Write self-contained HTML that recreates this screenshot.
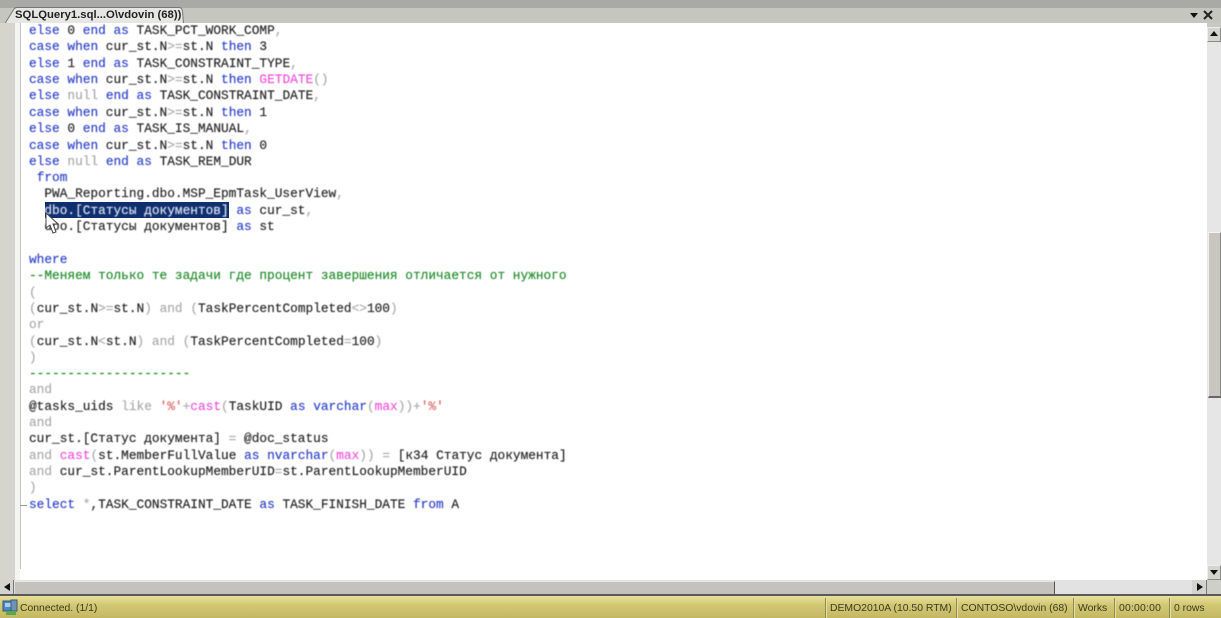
<!DOCTYPE html>
<html><head><meta charset="utf-8">
<style>
html,body{margin:0;padding:0;width:1221px;height:618px;overflow:hidden;background:#fff}
*{box-sizing:border-box}
.a{position:absolute}
#code{position:absolute;left:0;top:1px;width:1207px;height:579px;overflow:hidden;filter:blur(.45px)}
.l{position:absolute;left:29px;white-space:pre;font:12.8px/16px "Liberation Mono","DejaVu Sans Mono",monospace;color:#222;height:16px;-webkit-text-stroke:.15px currentColor}
.k{color:#2a3fc8}.g{color:#a8a8a8}.p{color:#ee50d8}.c{color:#1f8a2a}.r{color:#e06060}
.st{position:absolute;top:601px;font:10.4px/16px "Liberation Sans",sans-serif;color:#3c3a20;white-space:pre;filter:blur(.3px)}
.sep{position:absolute;top:598px;width:2px;height:20px;background:#8f8a58;border-right:1px solid #e4dea0}
</style></head><body>
<div class="a" style="left:0;top:0;width:1221px;height:8px;background:#a9a9a6"></div>
<div class="a" style="left:0;top:8px;width:1221px;height:15px;background:#c6c6c0"></div>
<svg class="a" style="left:0;top:6px" width="190" height="18"><path d="M0 17.5 L5 17.5 L14 3 Q15 1.5 17 1.5 L179 1.5 Q182 1.5 182.5 5 L183.5 17.5 L190 17.5" fill="#e6e6e2" stroke="#777" stroke-width="1"/></svg>
<div class="a" style="left:15px;top:7px;font:bold 11.3px/16px 'Liberation Sans',sans-serif;color:#222;white-space:pre;filter:blur(.3px)">SQLQuery1.sql...O\vdovin (68))</div>
<svg class="a" style="left:1190px;top:10px" width="28" height="12"><path d="M0 3 L8 3 L4 8Z" fill="#111"/><path d="M14 1 L22 9 M22 1 L14 9" stroke="#222" stroke-width="2"/></svg>

<div class="a" style="left:0;top:23px;width:1207px;height:557px;background:#fff"></div>
<div class="a" style="left:0;top:23px;width:15px;height:557px;background:#d6d5cd"></div>
<div class="a" style="left:15px;top:23px;width:5px;height:557px;background:#f4f4f2"></div>
<div class="a" style="left:20px;top:23px;width:1px;height:546px;background:#c4c4c4"></div>
<div class="a" style="left:20px;top:505px;width:7px;height:1px;background:#999"></div>

<div class="a" style="left:45px;top:202px;width:184px;height:16px;background:#0f2f6e"></div>

<div id="code">
<div class="l" style="top:22px"><span class="k">else</span> 0 <span class="k">end</span> <span class="k">as</span> TASK_PCT_WORK_COMP<span class="g">,</span></div>
<div class="l" style="top:38px"><span class="k">case</span> <span class="k">when</span> cur_st.N<span class="g">&gt;=</span>st.N <span class="k">then</span> 3</div>
<div class="l" style="top:55px"><span class="k">else</span> 1 <span class="k">end</span> <span class="k">as</span> TASK_CONSTRAINT_TYPE<span class="g">,</span></div>
<div class="l" style="top:71px"><span class="k">case</span> <span class="k">when</span> cur_st.N<span class="g">&gt;=</span>st.N <span class="k">then</span> <span class="p">GETDATE</span><span class="g">()</span></div>
<div class="l" style="top:87px"><span class="k">else</span> <span class="g">null</span> <span class="k">end</span> <span class="k">as</span> TASK_CONSTRAINT_DATE<span class="g">,</span></div>
<div class="l" style="top:104px"><span class="k">case</span> <span class="k">when</span> cur_st.N<span class="g">&gt;=</span>st.N <span class="k">then</span> 1</div>
<div class="l" style="top:120px"><span class="k">else</span> 0 <span class="k">end</span> <span class="k">as</span> TASK_IS_MANUAL<span class="g">,</span></div>
<div class="l" style="top:137px"><span class="k">case</span> <span class="k">when</span> cur_st.N<span class="g">&gt;=</span>st.N <span class="k">then</span> 0</div>
<div class="l" style="top:153px"><span class="k">else</span> <span class="g">null</span> <span class="k">end</span> <span class="k">as</span> TASK_REM_DUR</div>
<div class="l" style="top:169px"> <span class="k">from</span></div>
<div class="l" style="top:185px">  PWA_Reporting.dbo.MSP_EpmTask_UserView<span class="g">,</span></div>
<div class="l" style="top:202px">  <span style="color:#dfe6f5">dbo.[Статусы документов]</span> <span class="k">as</span> cur_st<span class="g">,</span></div>
<div class="l" style="top:218px">  dbo.[Статусы документов] <span class="k">as</span> st</div>
<div class="l" style="top:251px"><span class="k">where</span></div>
<div class="l" style="top:267px"><span class="c">--Меняем только те задачи где процент завершения отличается от нужного</span></div>
<div class="l" style="top:284px"><span class="g">(</span></div>
<div class="l" style="top:300px"><span class="g">(</span>cur_st.N<span class="g">&gt;=</span>st.N<span class="g">)</span> <span class="g">and</span> <span class="g">(</span>TaskPercentCompleted<span class="g">&lt;&gt;</span>100<span class="g">)</span></div>
<div class="l" style="top:316px"><span class="g">or</span></div>
<div class="l" style="top:333px"><span class="g">(</span>cur_st.N<span class="g">&lt;</span>st.N<span class="g">)</span> <span class="g">and</span> <span class="g">(</span>TaskPercentCompleted<span class="g">=</span>100<span class="g">)</span></div>
<div class="l" style="top:349px"><span class="g">)</span></div>
<div class="l" style="top:365px"><span class="c">---------------------</span></div>
<div class="l" style="top:381px"><span class="g">and</span></div>
<div class="l" style="top:398px">@tasks_uids <span class="g">like</span> <span class="r">'%'</span><span class="g">+</span><span class="p">cast</span><span class="g">(</span>TaskUID <span class="k">as</span> <span class="k">varchar</span><span class="g">(</span><span class="p">max</span><span class="g">))+</span><span class="r">'%'</span></div>
<div class="l" style="top:414px"><span class="g">and</span></div>
<div class="l" style="top:430px">cur_st.[Статус документа] <span class="g">=</span> @doc_status</div>
<div class="l" style="top:447px"><span class="g">and</span> <span class="p">cast</span><span class="g">(</span>st.MemberFullValue <span class="k">as</span> <span class="k">nvarchar</span><span class="g">(</span><span class="p">max</span><span class="g">))</span> <span class="g">=</span> [к34 Статус документа]</div>
<div class="l" style="top:463px"><span class="g">and</span> cur_st.ParentLookupMemberUID<span class="g">=</span>st.ParentLookupMemberUID</div>
<div class="l" style="top:479px"><span class="g">)</span></div>
<div class="l" style="top:496px"><span class="k">select</span> <span class="g">*</span>,TASK_CONSTRAINT_DATE <span class="k">as</span> TASK_FINISH_DATE <span class="k">from</span> A</div>
</div>

<svg class="a" style="left:44px;top:212px" width="18" height="24"><path d="M2 1 L2 16 L6 13 L9 21 L12 20 L9 12 L14 12Z" fill="#fff" stroke="#444" stroke-width="1"/></svg>

<!-- vertical scrollbar -->
<div class="a" style="left:1207px;top:23px;width:14px;height:557px;background:#e6e6e6"></div>
<div class="a" style="left:1207px;top:23px;width:14px;height:4px;background:#c8c8c2"></div>
<div class="a" style="left:1207px;top:27px;width:14px;height:15px;background:#d4d4cf;border:1px solid #8a8a86;border-left-color:#eee;border-top-color:#eee"></div>
<svg class="a" style="left:1210px;top:31px" width="9" height="7"><path d="M0 5 L8 5 L4 0Z" fill="#111"/></svg>
<div class="a" style="left:1208px;top:232px;width:13px;height:166px;background:#c9c6c0;border-top:1px solid #f4f4f4;border-left:1px solid #f0f0f0;border-right:1px solid #888;border-bottom:2px solid #666"></div>
<div class="a" style="left:1207px;top:565px;width:14px;height:15px;background:#d4d4cf;border:1px solid #8a8a86;border-left-color:#eee;border-top-color:#eee"></div>
<svg class="a" style="left:1210px;top:569px" width="9" height="7"><path d="M0 1 L8 1 L4 6Z" fill="#111"/></svg>

<!-- horizontal scrollbar -->
<div class="a" style="left:0;top:580px;width:1221px;height:15px;background:#e2e2e2"></div>
<div class="a" style="left:0;top:580px;width:14px;height:15px;background:#d4d4cf;border-right:1px solid #777"></div>
<svg class="a" style="left:3px;top:583px" width="9" height="10"><path d="M7 0 L7 8 L1 4Z" fill="#111"/></svg>
<div class="a" style="left:15px;top:581px;width:1040px;height:14px;background:#c4c2bc;border-top:1px solid #e8e8e6;border-right:1px solid #555"></div>
<div class="a" style="left:1192px;top:580px;width:15px;height:15px;background:#d4d4cf;border-right:1px solid #777;border-bottom:1px solid #777"></div>
<svg class="a" style="left:1196px;top:583px" width="9" height="10"><path d="M1 0 L1 8 L7 4Z" fill="#111"/></svg>
<div class="a" style="left:1207px;top:580px;width:14px;height:15px;background:#cfcfca"></div>

<!-- status bar -->
<div class="a" style="left:0;top:594px;width:1221px;height:2px;background:#5a5a58"></div>
<div class="a" style="left:0;top:596px;width:1221px;height:22px;background:linear-gradient(#e8e09e,#d2c874 40%,#c4b862)"></div>
<svg class="a" style="left:2px;top:598px" width="16" height="18">
<rect x="1" y="3" width="12" height="10" fill="#4f86c6" stroke="#35577e"/>
<rect x="3" y="5" width="8" height="4" fill="#a9cdf0"/>
<rect x="9" y="2" width="6" height="11" fill="#6f93b8" stroke="#3f5a78"/>
<rect x="4" y="13" width="10" height="4" fill="#5aa84a"/>
</svg>
<div class="st" style="left:20px">Connected. (1/1)</div>
<div class="sep" style="left:825px"></div>
<div class="st" style="left:830px">DEMO2010A (10.50 RTM)</div>
<div class="sep" style="left:956px"></div>
<div class="st" style="left:961px">CONTOSO\vdovin (68)</div>
<div class="sep" style="left:1073px"></div>
<div class="st" style="left:1078px">Works</div>
<div class="sep" style="left:1114px"></div>
<div class="st" style="left:1119px;letter-spacing:.2px">00:00:00</div>
<div class="sep" style="left:1169px"></div>
<div class="st" style="left:1174px">0 rows</div>
</body></html>
